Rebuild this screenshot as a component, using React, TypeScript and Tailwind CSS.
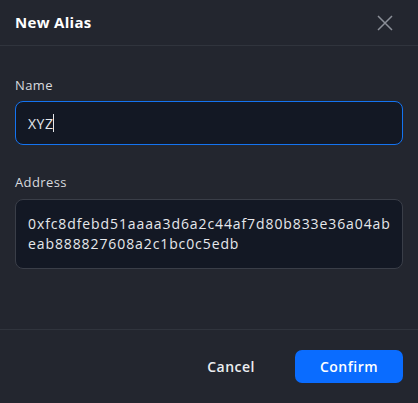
const LINE_1 = "0xfc8dfebd51aaaa3d6a2c44af7d80b833e36a04ab";
const LINE_2 = "eab888827608a2c1bc0c5edb";

export default function App() {
  return (
    <div
      className="w-[418px] h-[403px] bg-[#23262f] flex flex-col text-white"
      style={{ fontFamily: '"Open Sans", "Noto Sans", sans-serif' }}
    >
      {/* header */}
      <div className="h-[46px] flex items-center justify-between pl-[15px] pr-[25px] border-b border-[#30343d]">
        <h2 className="text-[15px] font-bold tracking-[0.3px]">New Alias</h2>
        <button className="text-[#8b8f98]">
          <svg width="16" height="16" viewBox="0 0 16 16" fill="none" stroke="currentColor" strokeWidth="1.5">
            <path d="M1 1 L15 15 M15 1 L1 15" />
          </svg>
        </button>
      </div>

      {/* body */}
      <div className="flex-1 px-[15px] pt-[30px]">
        <label className="block text-[13px] text-[#d8dadf] leading-[18px] tracking-[0.4px]">Name</label>
        <div className="mt-[7px] h-[44px] rounded-[8px] border border-[#1473f0] bg-[#131824] flex items-center px-[12px]">
          <span className="text-[14px] text-[#e6e8ec] tracking-[0.5px]">XYZ</span>
          <span className="w-px h-[18px] bg-[#e6e8ec]" />
        </div>

        <label className="block mt-[28px] text-[13px] text-[#d8dadf] leading-[18px] tracking-[0.4px]">Address</label>
        <div className="mt-[8px] h-[70px] rounded-[8px] border border-[#3a3e48] bg-[#131824] px-[12px] pt-[14px]">
          <p className="text-[14px] leading-[20px] text-[#e6e8ec] tracking-[0.9px] whitespace-nowrap">
            <span className="block">{LINE_1}</span>
            <span className="block">{LINE_2}</span>
          </p>
        </div>
      </div>

      {/* footer */}
      <div className="h-[74px] border-t border-[#30343d] flex items-center justify-end gap-[40px] px-[15px]">
        <button className="text-[14px] font-semibold text-[#eceef1] tracking-[0.5px]">Cancel</button>
        <button className="w-[108px] h-[33px] rounded-[7px] bg-[#0a6cff] text-[14px] font-semibold text-white tracking-[0.5px]">
          Confirm
        </button>
      </div>
    </div>
  );
}
